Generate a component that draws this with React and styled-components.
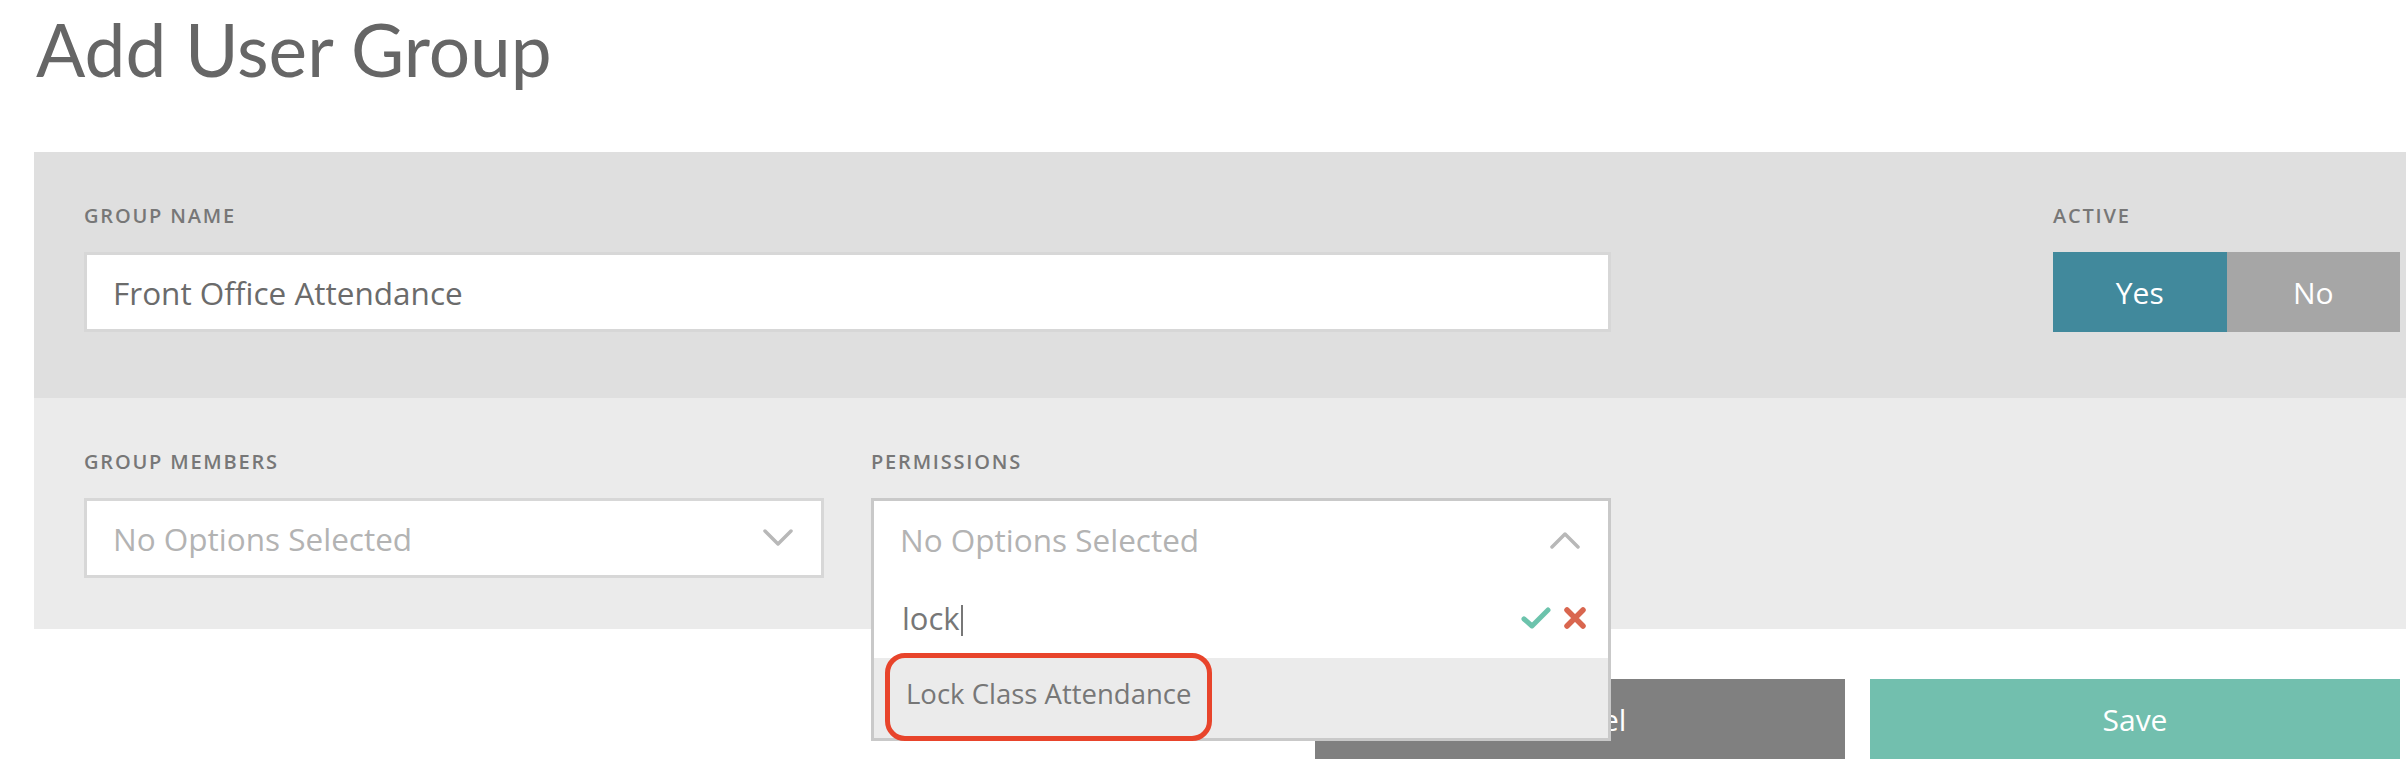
import React, { useState } from "react";
import styled, { createGlobalStyle } from "styled-components";

const GlobalStyle = createGlobalStyle`
  html, body {
    margin: 0;
    padding: 0;
    background: #fff;
    overflow: hidden;
  }
  body {
    font-family: "Open Sans", "Liberation Sans", sans-serif;
  }
`;

const Page = styled.div`
  padding-left: 34px;
  width: 2406px;
  box-sizing: border-box;
`;

const Title = styled.h1`
  margin: 0;
  height: 152px;
  padding: 5px 0 0 2px;
  box-sizing: border-box;
  font-family: "Lato", sans-serif;
  font-weight: 400;
  font-size: 73px;
  color: #666;
`;

const Section = styled.div`
  display: flex;
  background: ${(p) => (p.light ? "#ebebeb" : "#dfdfdf")};
  padding: ${(p) => (p.light ? "47px 6px 51px 50px" : "47px 6px 66px 50px")};
`;

const Field = styled.div`
  display: flex;
  flex-direction: column;
  width: ${(p) => p.width}px;
  margin-left: ${(p) => p.left || 0};
  position: relative;
`;

const Label = styled.div`
  font-size: 20px;
  font-weight: 600;
  letter-spacing: 1.8px;
  color: #777;
  height: 34px;
  line-height: 34px;
  margin-bottom: 19px;
`;

const TextInput = styled.div`
  height: 80px;
  box-sizing: border-box;
  border: 3px solid #d7d7d7;
  background: #fff;
  display: flex;
  align-items: center;
  padding-left: 26px;
  font-size: 31.5px;
  color: #6b6b6b;
`;

const Toggle = styled.div`
  display: flex;
  height: 80px;
`;

const ToggleOption = styled.div`
  flex: 1;
  display: flex;
  align-items: center;
  justify-content: center;
  background: ${(p) => (p.active ? "#41899c" : "#a6a6a6")};
  color: #fff;
  font-size: 30px;
  cursor: pointer;
`;

const SelectBox = styled.div`
  height: 80px;
  box-sizing: border-box;
  border: 3px solid ${(p) => (p.open ? "#c9c9c9" : "#d7d7d7")};
  border-bottom: ${(p) => (p.open ? "none" : "3px solid #d7d7d7")};
  background: #fff;
  display: flex;
  align-items: center;
  justify-content: space-between;
  padding: 0 28px 0 26px;
  font-size: 31.5px;
  color: #b3b3b3;
`;

const Dropdown = styled.div`
  position: absolute;
  left: 0;
  right: 0;
  top: 100%;
  z-index: 5;
  background: #fff;
  border: 3px solid #c9c9c9;
  border-top: none;
`;

const SearchRow = styled.div`
  height: 80px;
  display: flex;
  align-items: center;
  justify-content: space-between;
  padding: 0 21px 0 28px;
  font-size: 31px;
  color: #777;
`;

const Caret = styled.span`
  display: inline-block;
  width: 2px;
  height: 31px;
  background: #777;
  margin-left: 1px;
  vertical-align: -6px;
`;

const SearchActions = styled.div`
  display: flex;
  gap: 12px;
  align-items: center;
`;

const OptionRow = styled.div`
  position: relative;
  height: 80px;
  background: #ebebeb;
  display: flex;
  align-items: center;
  padding-left: 32px;
  padding-bottom: 9px;
  box-sizing: border-box;
  font-size: 27.5px;
  color: #777;
`;

const Highlight = styled.div`
  position: absolute;
  left: 11px;
  top: -5px;
  bottom: -3px;
  width: 327px;
  box-sizing: border-box;
  border: 5px solid #e8442b;
  border-radius: 20px;
`;

const Actions = styled.div`
  display: flex;
  justify-content: flex-end;
  gap: 25px;
  padding: 50px 6px 0 0;
`;

const Button = styled.button`
  width: 530px;
  height: 80px;
  border: none;
  background: ${(p) => (p.primary ? "#72bfae" : "#808080")};
  color: #fff;
  font-family: "Open Sans", sans-serif;
  font-size: 30px;
  cursor: pointer;
`;

const Chevron = ({ up }) => (
  <svg width="30" height="18" viewBox="0 0 30 18">
    <polyline
      points={up ? "2,16 15,3 28,16" : "2,2 15,15 28,2"}
      fill="none"
      stroke="#b8b8b8"
      strokeWidth="3.5"
      strokeLinecap="round"
      strokeLinejoin="round"
    />
  </svg>
);

const CheckIcon = () => (
  <svg width="30" height="22" viewBox="0 0 30 22">
    <polyline
      points="3,12 11,19 27,3"
      fill="none"
      stroke="#6cc3ac"
      strokeWidth="5"
      strokeLinecap="round"
      strokeLinejoin="round"
    />
  </svg>
);

const CrossIcon = () => (
  <svg width="24" height="22" viewBox="0 0 24 22">
    <path
      d="M4 3 L20 19 M20 3 L4 19"
      fill="none"
      stroke="#d9664f"
      strokeWidth="5.5"
      strokeLinecap="round"
    />
  </svg>
);

const App = () => {
  const [active, setActive] = useState(true);
  const [search] = useState("lock");

  return (
    <Page>
      <GlobalStyle />
      <Title>Add User Group</Title>
      <Section>
        <Field width={1527}>
          <Label>GROUP NAME</Label>
          <TextInput>Front Office Attendance</TextInput>
        </Field>
        <Field width={347} left="auto">
          <Label>ACTIVE</Label>
          <Toggle>
            <ToggleOption active={active} onClick={() => setActive(true)}>
              Yes
            </ToggleOption>
            <ToggleOption active={!active} onClick={() => setActive(false)}>
              No
            </ToggleOption>
          </Toggle>
        </Field>
      </Section>
      <Section light>
        <Field width={740}>
          <Label>GROUP MEMBERS</Label>
          <SelectBox>
            No Options Selected
            <Chevron />
          </SelectBox>
        </Field>
        <Field width={740} left="47px">
          <Label>PERMISSIONS</Label>
          <div style={{ position: "relative" }}>
            <SelectBox open>
              No Options Selected
              <Chevron up />
            </SelectBox>
            <Dropdown>
              <SearchRow>
                <span>
                  {search}
                  <Caret />
                </span>
                <SearchActions>
                  <CheckIcon />
                  <CrossIcon />
                </SearchActions>
              </SearchRow>
              <OptionRow>
                Lock Class Attendance
                <Highlight />
              </OptionRow>
            </Dropdown>
          </div>
        </Field>
      </Section>
      <Actions>
        <Button>Cancel</Button>
        <Button primary>Save</Button>
      </Actions>
    </Page>
  );
};

export default App;
